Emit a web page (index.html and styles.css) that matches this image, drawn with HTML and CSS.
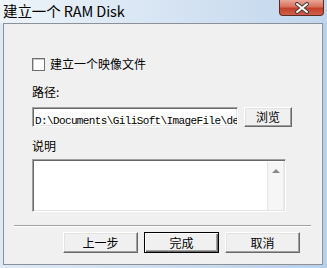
FILE: index.html
```html
<!DOCTYPE html>
<html lang="zh-CN">
<head>
<meta charset="utf-8">
<title>建立一个 RAM Disk</title>
<link rel="stylesheet" href="styles.css">
</head>
<body>
<div class="window">
  <div class="titlebar">
    <span class="title">建立一个 RAM Disk</span>
    <div class="close">
      <svg width="18" height="12" viewBox="0 0 18 12">
        <path d="M4 2 L14 10 M14 2 L4 10" stroke="#4a3a3a" stroke-width="4" stroke-linecap="round"/>
        <path d="M4 2 L14 10 M14 2 L4 10" stroke="#ffffff" stroke-width="2" stroke-linecap="round"/>
      </svg>
    </div>
  </div>
  <div class="client">
    <div class="section">
      <label class="check-row"><span class="checkbox"></span><span>建立一个映像文件</span></label>
      <div class="label path-label">路径:</div>
      <div class="path-row">
        <div class="input"><span class="input-text">D:\Documents\GiliSoft\ImageFile\de</span></div>
        <div class="btn browse">浏览</div>
      </div>
      <div class="label desc-label">说明</div>
      <div class="textarea">
        <div class="ta-body"></div>
        <div class="scrollbar"><span class="arrow"></span></div>
      </div>
    </div>
    <div class="separator"></div>
    <div class="buttons">
      <div class="btn action">上一步</div>
      <div class="btn action default">完成</div>
      <div class="btn action">取消</div>
    </div>
  </div>
</div>
</body>
</html>
```
FILE: styles.css
```css
* { box-sizing: border-box; }
html, body {
  margin: 0;
  padding: 0;
  width: 327px;
  height: 268px;
  overflow: hidden;
  background: #ffffff;
  font-family: "Noto Sans CJK SC", "Noto Sans", sans-serif;
  font-size: 12px;
  color: #000;
}
.window {
  width: 327px;
  height: 268px;
  display: flex;
  flex-direction: column;
  background: linear-gradient(to right, #dfe9f5 0%, #cfdff0 45%, #b9d0ea 100%);
}
.titlebar {
  height: 23px;
  display: flex;
  align-items: flex-start;
  padding-left: 3px;
  background: linear-gradient(to right, #eef4fa 0%, #dbe7f4 40%, #c1d6ed 100%);
}
.title {
  font-size: 14.5px;
  line-height: 16px;
  margin-top: 3px;
  letter-spacing: -0.1px;
  white-space: nowrap;
}
.close {
  margin-left: auto;
  margin-right: 3px;
  width: 45px;
  height: 16px;
  border: 1px solid #5b2a22;
  border-top: none;
  border-radius: 0 0 4px 4px;
  background: linear-gradient(to bottom, #e8a798 0%, #d8705c 45%, #c2402a 55%, #d0604a 100%);
  display: flex;
  align-items: center;
  justify-content: center;
}
.client {
  flex: 1;
  margin: 0 4px 3px 3px;
  border: 1px solid #8c9099;
  background: #f0f0f0;
  display: flex;
  flex-direction: column;
}
.section {
  padding: 33px 0 0 28px;
  display: flex;
  flex-direction: column;
}
.check-row {
  display: flex;
  align-items: center;
  height: 14px;
  line-height: 14px;
}
.checkbox {
  width: 13px;
  height: 13px;
  background: #fff;
  border: 1px solid #707070;
  box-shadow: inset 1px 1px 0 #c8c8c8;
  margin-right: 5px;
}
.label {
  line-height: 14px;
  height: 14px;
}
.path-label { margin-top: 14px; }
.path-row {
  margin-top: 8px;
  display: flex;
  height: 20px;
}
.input {
  width: 206px;
  height: 20px;
  background: #fff;
  border-style: solid;
  border-width: 1px;
  border-color: #a0a0a0 #ffffff #ffffff #a0a0a0;
  box-shadow: inset 1px 1px 0 #696969, inset -1px -1px 0 #e3e3e3;
  overflow: hidden;
  padding: 2px 0 0 2px;
  white-space: nowrap;
}
.input-text {
  font-family: "Liberation Mono", "DejaVu Sans Mono", monospace;
  font-size: 11px;
  letter-spacing: -0.62px;
  line-height: 15px;
}
.btn {
  background: #f0f0f0;
  border-style: solid;
  border-width: 1px;
  border-color: #ffffff #696969 #696969 #ffffff;
  box-shadow: inset -1px -1px 0 #a0a0a0, inset 1px 1px 0 #e3e3e3;
  display: flex;
  align-items: center;
  justify-content: center;
  font-size: 12px;
  line-height: 14px;
}
.browse {
  margin-left: 6px;
  width: 48px;
  height: 20px;
}
.desc-label { margin-top: 12px; }
.textarea {
  margin-top: 6px;
  width: 254px;
  height: 53px;
  display: flex;
  background: #fff;
  border-style: solid;
  border-width: 1px;
  border-color: #a0a0a0 #ffffff #ffffff #a0a0a0;
  box-shadow: inset 1px 1px 0 #696969, inset -1px -1px 0 #e3e3e3;
  padding: 2px 1px 1px 2px;
}
.ta-body { flex: 1; }
.scrollbar {
  width: 17px;
  background: #f6f6f6;
  border-left: 1px solid #e4e4e4;
  border-right: 1px solid #e8e8e8;
  display: flex;
  justify-content: center;
  padding-top: 7px;
}
.arrow {
  width: 0;
  height: 0;
  border-left: 4px solid transparent;
  border-right: 4px solid transparent;
  border-bottom: 4px solid #8a8a8a;
}
.separator {
  margin: 13px 11px 0 10px;
  height: 2px;
  border-top: 1px solid #a0a0a0;
  border-bottom: 1px solid #ffffff;
}
.buttons {
  margin-top: 5px;
  padding-left: 59px;
  display: flex;
  gap: 6px;
}
.action {
  width: 75px;
  height: 21px;
}
.default {
  border-color: #000000;
  box-shadow: inset 1px 1px 0 #ffffff, inset -1px -1px 0 #696969, inset -2px -2px 0 #a0a0a0;
}
```
